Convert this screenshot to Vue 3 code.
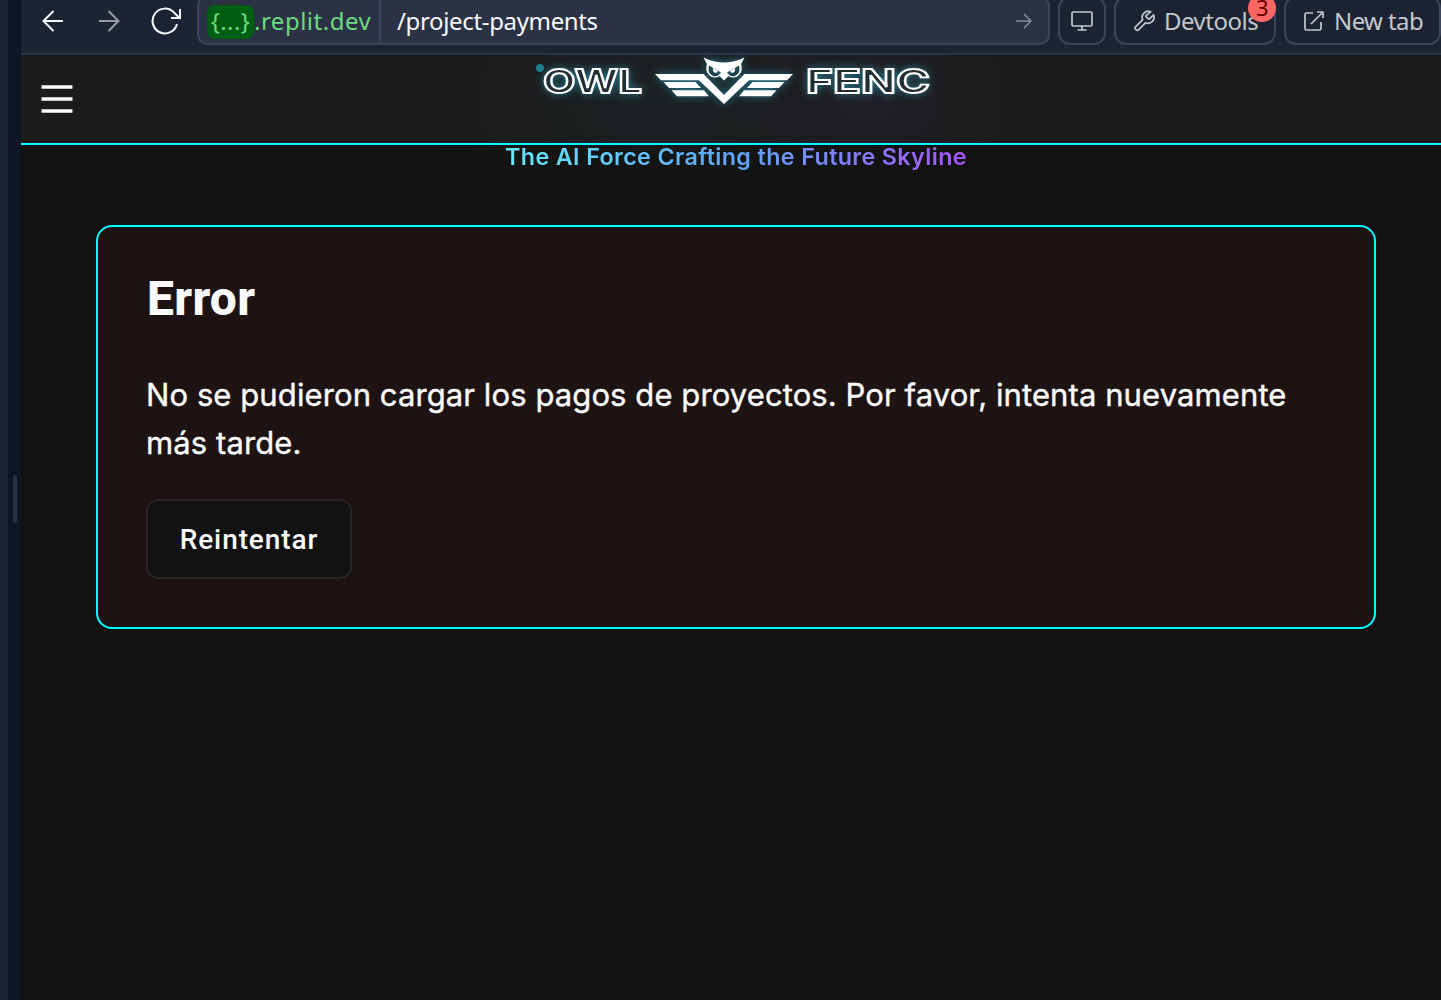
<script setup>
const message = 'No se pudieron cargar los pagos de proyectos. Por favor, intenta nuevamente más tarde.'
const wing = 'M15 25 H63.500 L84 46 L104.500 25 H153 L147 31.200 H109 L84 55 L59 31.200 H21 Z M23.500 33 H55.500 L61 39 H29 Z M31.500 41.300 H64 L69 47.300 H37 Z M144.500 33 H112.500 L107 39 H139 Z M136.500 41.300 H104 L99 47.300 H131 Z'
const head = 'M63.500 8.500Q74 13.500 84 13.500Q94 13.500 104.500 8.500L101 15Q103.500 22 98 27Q93 30 88.500 27L84 31.500L79.500 27Q75 30 70 27Q64.500 22 67 15Z M69 16.500Q67 24.500 73 27Q78.500 28 81 23.500Z M73 19.200L78 22Q77 24.200 75 23.800Q72.500 23 73 19.200Z M99 16.500Q101 24.500 95 27Q89.500 28 87 23.500Z M95 19.200L90 22Q91 24.200 93 23.800Q95.500 23 95 19.200Z'
</script>

<template>
  <div class="screen">
    <div class="rail"></div>
    <div class="gutter"><div class="grip"></div></div>
    <div class="pane">
      <nav class="toolbar">
        <svg class="back" width="24" height="24" viewBox="0 0 24 24"><path d="M22 12H2.500M12.500 2 2.500 12l10 10" /></svg>
        <svg class="forward" width="24" height="24" viewBox="0 0 24 24"><path d="M2 12h19.500M11.500 2l10 10-10 10" /></svg>
        <svg class="reload" width="32" height="30" viewBox="0 0 32 30"><path d="M26 18A12.400 12.400 0 1 1 23 6.500L28.500 12M29 3V12H20" /></svg>
        <div class="address">
          <div class="host"><span class="chip">{...}</span><span class="domain">.replit.dev</span></div>
          <span class="path">/project-payments</span>
          <svg class="go" width="18" height="18" viewBox="0 0 18 18"><path d="M1 9h15M9 2l7 7-7 7" /></svg>
        </div>
        <div class="tool monitor">
          <svg width="24" height="22" viewBox="0 0 24 22"><rect x="2" y="2" width="20" height="14" rx="1.500" /><path d="M12 16v4M7.500 20h9" /></svg>
        </div>
        <div class="tool devtools">
          <svg width="24" height="24" viewBox="0 0 24 24"><path d="M14.300 6.300a1.200 1.200 0 0 0 0 1.700l1.700 1.700a1.200 1.200 0 0 0 1.700 0l3.900-3.900a6 6 0 0 1-7.900 7.900l-6.900 6.900a2.100 2.100 0 0 1-3-3l6.900-6.900a6 6 0 0 1 7.900-7.900z" /></svg>
          <span>Devtools</span>
          <b class="badge">3</b>
        </div>
        <div class="tool newtab">
          <svg width="22" height="22" viewBox="0 0 22 22"><path d="M10 3H3.500A1.500 1.500 0 0 0 2 4.500V18.500A1.500 1.500 0 0 0 3.500 20H16.500A1.500 1.500 0 0 0 18 18.500V12M8 14 20 2M14 2h6v6" /></svg>
          <span>New tab</span>
        </div>
      </nav>

      <header class="header">
        <svg class="menu" width="32" height="30" viewBox="0 0 32 30"><path d="M.5 3h31M.5 15h31M.5 27h31" /></svg>
        <div class="brand">
          <svg class="logo" width="410" height="54" viewBox="0 0 410 54">
            <circle cx="10" cy="13" r="4" fill="#217d8d" />
            <g class="glow">
              <text class="word" x="13" y="38" textLength="99" lengthAdjust="spacingAndGlyphs">OWL</text>
              <g transform="translate(110 -6)" fill="#fff">
                <path :d="wing" />
                <path fill-rule="evenodd" :d="head" />
              </g>
              <text class="word" x="276" y="38" textLength="124" lengthAdjust="spacingAndGlyphs">FENC</text>
            </g>
          </svg>
        </div>
      </header>
      <p class="tagline"><span>The AI Force Crafting the Future Skyline</span></p>

      <main class="card">
        <h1>Error</h1>
        <p class="message">{{ message }}</p>
        <button type="button">Reintentar</button>
      </main>
    </div>
  </div>
</template>

<style>
body { margin: 0; background: #121212; overflow: hidden; }
</style>

<style scoped>
* { box-sizing: border-box; }
.screen { display: flex; width: 1441px; height: 1000px; overflow: hidden; background: #121212; font-family: Roboto, "Noto Sans", sans-serif; color: #fafafa; }
svg { display: block; flex: none; fill: none; stroke: currentColor; stroke-width: 2; }
.rail { width: 8px; background: #1c2333; }
.gutter { width: 13px; background: #0e1525; display: flex; align-items: center; justify-content: flex-end; padding-right: 4px; }
.grip { width: 4px; height: 48px; margin-top: -2px; border-radius: 2px; background: #2b3245; }
.pane { width: 1420px; height: 1000px; overflow: hidden; }
.toolbar { height: 55px; background: #1c2333; border-bottom: 2px solid #2b3245; display: flex; align-items: flex-start; font-family: "Noto Sans", sans-serif; font-size: 24px; line-height: 34px; }
.toolbar span { padding-bottom: 2px; }
.back { margin: 9px 0 0 20px; color: #f5f9fc; }
.forward { margin: 9px 0 0 32px; color: #989ba2; }
.reload { margin: 6px 0 0 30px; color: #f5f9fc; }
.address { width: 853px; height: 49px; margin: -4px 0 0 14px; padding-top: 3px; border: 2px solid #3c445c; border-radius: 10px; background: #2b3245; display: flex; align-items: center; }
.host { display: flex; align-items: center; align-self: stretch; margin-top: -3px; padding-top: 3px; width: 182px; border-right: 2px solid #3c445c; padding-left: 8px; color: #6cd97e; }
.toolbar .chip { width: 47px; height: 34px; padding: 0; border-radius: 8px; background: #005e12; text-align: center; line-height: 32px; letter-spacing: .4px; }
.domain { letter-spacing: .5px; }
.path { margin-left: 16px; color: #f5f9fc; letter-spacing: -.35px; }
.go { margin-left: auto; margin-right: 15px; margin-top: -2px; color: #878b96; stroke-width: 1.500; }
.tool { height: 49px; margin-top: -4px; padding-top: 2px; margin-left: 8px; border: 2px solid #3c445c; border-radius: 12px; display: flex; align-items: center; color: #c2c8cc; position: relative; flex: none; letter-spacing: -.5px; }
.tool svg { margin-top: -1px; stroke-width: 1.700; stroke-linejoin: round; }
.monitor { width: 48px; justify-content: center; }
.devtools { width: 162px; padding-left: 16px; gap: 8px; }
.newtab { width: 157px; padding-left: 17px; gap: 9px; letter-spacing: -.6px; }
.badge { position: absolute; right: -2px; top: -4px; width: 28px; height: 28px; border-radius: 50%; background: #ff6666; color: #660000; font-size: 22px; font-weight: 400; line-height: 27px; text-align: center; }
.header { height: 90px; border-bottom: 2px solid #00ffff; background: radial-gradient(ellipse 140px 115px at 850px 45px, #202027, transparent), radial-gradient(ellipse 190px 115px at 640px 45px, #1c2224, transparent), #1b1b1b; display: flex; align-items: flex-start; }
.menu { margin: 29px 0 0 20px; stroke: #fafafa; stroke-width: 3.500; }
.brand { margin-left: 457px; }
.logo { stroke: none; overflow: visible; }
.glow { filter: drop-shadow(0 0 4px #27758b); }
.word { font-family: Inter, sans-serif; font-size: 32.500px; font-weight: 700; fill: #222e35; stroke: #fff; stroke-width: 1.900; }
.tagline { margin: 0; height: 80px; padding-left: 484px; font-family: Inter, sans-serif; font-size: 23.300px; font-weight: 600; letter-spacing: .37px; line-height: 24px; background: radial-gradient(ellipse 250px 40px at 650px 0, #141818, transparent); }
.tagline span { display: inline-block; padding-bottom: 4px; background: linear-gradient(90deg, #67e8f9, #60a5fa 50%, #a855f7); background-clip: text; color: transparent; }
.card { margin-left: 75px; width: 1280px; height: 404px; border: 2px solid #00ffff; border-radius: 16px; background: #1e1313; padding: 48px; }
h1 { margin: 0; padding-left: 1px; font-size: 48px; line-height: 48px; font-weight: 800; letter-spacing: .3px; }
.message { margin: 48px 0 0; font-family: Inter, sans-serif; font-size: 31px; line-height: 48px; letter-spacing: .11px; word-spacing: -.1px; -webkit-text-stroke: .4px #fafafa; }
button { display: block; margin-top: 32px; width: 206px; height: 80px; border: 2px solid #262626; border-radius: 12px; background: #121212; color: #fafafa; font-family: Roboto, sans-serif; font-size: 28px; font-weight: 500; letter-spacing: .9px; padding: 0; }
</style>
